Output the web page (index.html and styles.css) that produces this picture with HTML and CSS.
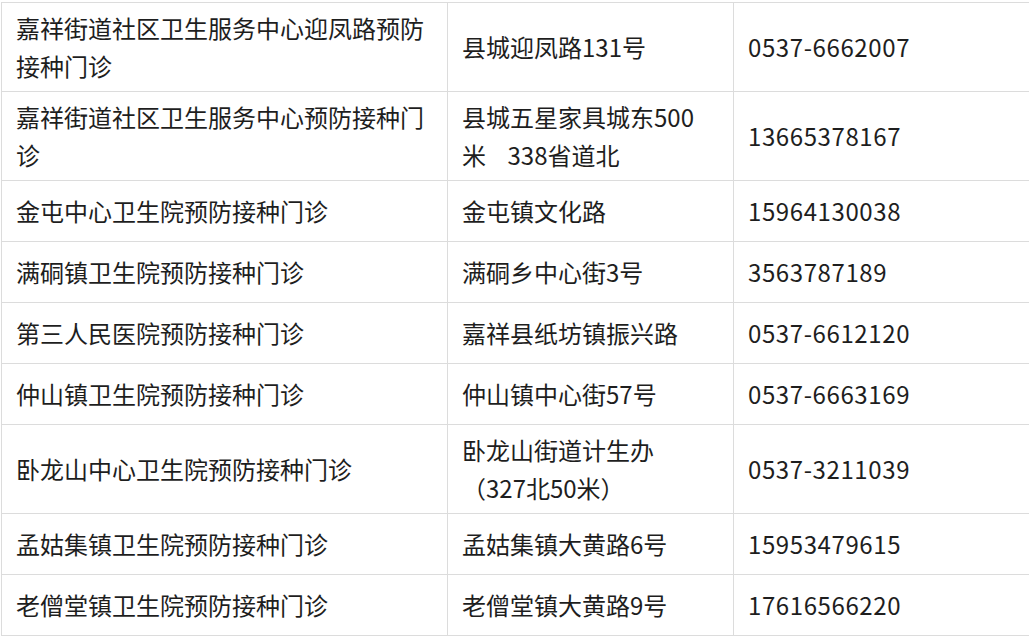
FILE: index.html
```html
<!DOCTYPE html>
<html lang="zh-CN">
<head>
<meta charset="utf-8">
<title>预防接种门诊</title>
<link rel="stylesheet" href="styles.css">
</head>
<body>
<table class="clinics">
  <colgroup>
    <col class="c-name">
    <col class="c-addr">
    <col class="c-tel">
  </colgroup>
  <tbody>
    <tr class="tall"><td>嘉祥街道社区卫生服务中心迎凤路预防接种门诊</td><td>县城迎凤路131号</td><td class="tel">0537-6662007</td></tr>
    <tr class="tall"><td>嘉祥街道社区卫生服务中心预防接种门诊</td><td>县城五星家具城东500米&nbsp;&nbsp;&nbsp;&nbsp;338省道北</td><td class="tel">13665378167</td></tr>
    <tr><td>金屯中心卫生院预防接种门诊</td><td>金屯镇文化路</td><td class="tel">15964130038</td></tr>
    <tr><td>满硐镇卫生院预防接种门诊</td><td>满硐乡中心街3号</td><td class="tel">3563787189</td></tr>
    <tr><td>第三人民医院预防接种门诊</td><td>嘉祥县纸坊镇振兴路</td><td class="tel">0537-6612120</td></tr>
    <tr><td>仲山镇卫生院预防接种门诊</td><td>仲山镇中心街57号</td><td class="tel">0537-6663169</td></tr>
    <tr class="tall"><td>卧龙山中心卫生院预防接种门诊</td><td>卧龙山街道计生办<br>（327北50米）</td><td class="tel">0537-3211039</td></tr>
    <tr><td>孟姑集镇卫生院预防接种门诊</td><td>孟姑集镇大黄路6号</td><td class="tel">15953479615</td></tr>
    <tr><td>老僧堂镇卫生院预防接种门诊</td><td>老僧堂镇大黄路9号</td><td class="tel">17616566220</td></tr>
  </tbody>
</table>
</body>
</html>
```

FILE: styles.css
```css
html, body {
  margin: 0;
  padding: 0;
  background: #ffffff;
}

body {
  padding-top: 2px;
  font-family: "Noto Sans CJK SC", "Noto Sans", sans-serif;
  color: #1e1e1e;
}

.clinics {
  border-collapse: collapse;
  table-layout: fixed;
  width: 1028px;
  margin-left: 1px;
}

.c-name { width: 446px; }
.c-addr { width: 286px; }
.c-tel { width: 296px; }

.clinics td {
  border: 1px solid #dcdcdc;
  padding: 0 12px 0 14px;
  font-size: 24px;
  line-height: 38px;
  height: 60px;
  vertical-align: middle;
}

.clinics tr.tall td {
  height: 88px;
}

.clinics td.tel {
  letter-spacing: 0.6px;
}
```
